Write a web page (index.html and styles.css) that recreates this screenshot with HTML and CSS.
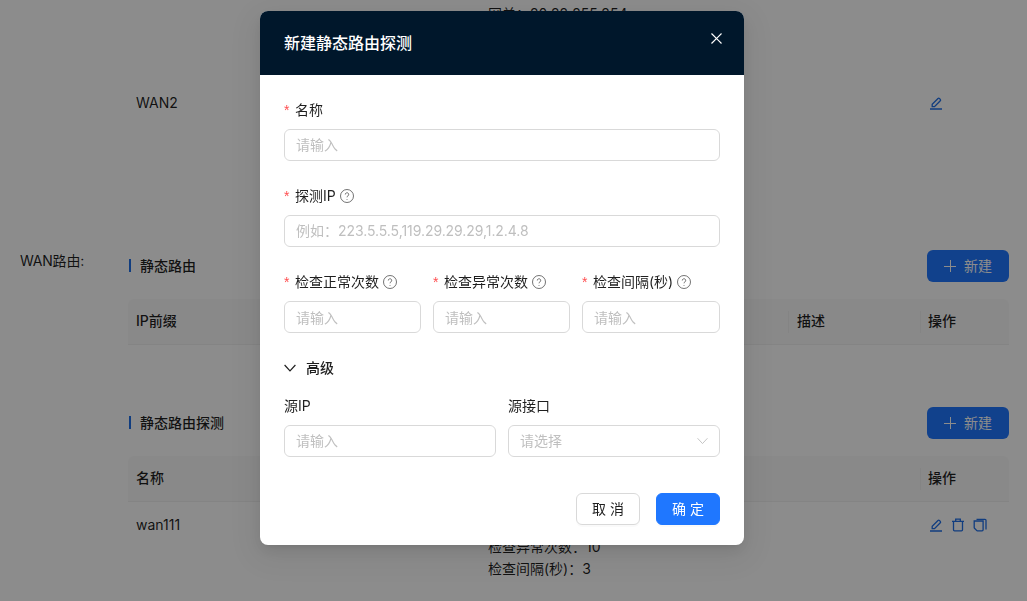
FILE: index.html
```html
<!DOCTYPE html>
<html lang="en">
<head>
    <meta charset="UTF-8">
    <meta name="viewport" content="width=device-width, initial-scale=1.0">
    <title>新建静态路由探测</title>
    <link rel="stylesheet" href="styles.css">
</head>
<body>

    <div class="page">
        <div class="wan-row">
            <div class="wan-name">WAN2</div>
            <div class="wan-info">网关：20.22.255.254</div>
            <div class="wan-action">
                <svg class="act-icon" viewBox="0 0 14 14"><path d="M1 13h12M3.200 10.600V8.300L9 2.500a1 1 0 0 1 1.400 0l.9.9a1 1 0 0 1 0 1.400l-5.800 5.800H3.200z"/></svg>
            </div>
        </div>

        <div class="route-block">
            <div class="route-label">WAN路由:</div>
            <div class="route-main">
                <div class="section-head">
                    <h3 class="section-title">静态路由</h3>
                    <button class="add-btn"><span class="plus"></span>新建</button>
                </div>
                <div class="thead">
                    <div class="th th-grow">IP前缀</div>
                    <div class="th th-desc"><i class="th-sep"></i>描述</div>
                    <div class="th th-op"><i class="th-sep"></i>操作</div>
                </div>

                <div class="section-head section-second">
                    <h3 class="section-title">静态路由探测</h3>
                    <button class="add-btn"><span class="plus"></span>新建</button>
                </div>
                <div class="thead">
                    <div class="th th-grow">名称</div>
                    <div class="th th-op"><i class="th-sep"></i>操作</div>
                </div>
                <div class="trow">
                    <div class="td-name">wan111</div>
                    <div class="td-info">
                        <div>检查异常次数：10</div>
                        <div>检查间隔(秒)：3</div>
                    </div>
                    <div class="td-op">
                        <svg class="act-icon" viewBox="0 0 14 14"><path d="M1 13h12M3.200 10.600V8.300L9 2.500a1 1 0 0 1 1.400 0l.9.9a1 1 0 0 1 0 1.400l-5.800 5.800H3.200z"/></svg>
                        <svg class="act-icon" viewBox="0 0 14 14"><path d="M1 3.300h12M4.700 3V1.200h4.600V3M2.500 3.300v8.500a1 1 0 0 0 1 1h7a1 1 0 0 0 1-1V3.300"/></svg>
                        <svg class="act-icon" viewBox="0 0 14 14"><path d="M3.500 1.300h8.500a1 1 0 0 1 1 1v9.200M1.200 3h8.900v8.800a1 1 0 0 1-1 1H4.400a1 1 0 0 1-.8-.4l-2.100-2.200a1 1 0 0 1-.3-.7z"/></svg>
                    </div>
                </div>
            </div>
        </div>
    </div>

    <div class="mask"></div>

    <div class="modal">
        <div class="modal-header">
            <div class="modal-title">新建静态路由探测</div>
            <svg class="modal-close" viewBox="0 0 11 11"><path d="M.5.500l10 10M10.500.500l-10 10"/></svg>
        </div>
        <div class="modal-body">
            <div class="form-item">
                <label class="form-label required">名称</label>
                <div class="input">请输入</div>
            </div>
            <div class="form-item">
                <label class="form-label required">探测IP<svg class="help" viewBox="0 0 14 14"><circle cx="7" cy="7" r="6.500"/><path d="M5.300 5.500a1.700 1.700 0 1 1 2.600 1.400c-.6.400-.9.700-.9 1.400"/><path d="M7 10v.8"/></svg></label>
                <div class="input">例如：<span class="hint-ip">223.5.5.5,119.29.29.29,1.2.4.8</span></div>
            </div>
            <div class="form-row form-row-three">
                <div class="form-item">
                    <label class="form-label required">检查正常次数<svg class="help" viewBox="0 0 14 14"><circle cx="7" cy="7" r="6.500"/><path d="M5.300 5.500a1.700 1.700 0 1 1 2.600 1.400c-.6.400-.9.700-.9 1.400"/><path d="M7 10v.8"/></svg></label>
                    <div class="input">请输入</div>
                </div>
                <div class="form-item">
                    <label class="form-label required">检查异常次数<svg class="help" viewBox="0 0 14 14"><circle cx="7" cy="7" r="6.500"/><path d="M5.300 5.500a1.700 1.700 0 1 1 2.600 1.400c-.6.400-.9.700-.9 1.400"/><path d="M7 10v.8"/></svg></label>
                    <div class="input">请输入</div>
                </div>
                <div class="form-item">
                    <label class="form-label required">检查间隔(秒)<svg class="help" viewBox="0 0 14 14"><circle cx="7" cy="7" r="6.500"/><path d="M5.300 5.500a1.700 1.700 0 1 1 2.600 1.400c-.6.400-.9.700-.9 1.400"/><path d="M7 10v.8"/></svg></label>
                    <div class="input">请输入</div>
                </div>
            </div>
            <div class="advanced">
                <svg class="advanced-arrow" viewBox="0 0 12 8"><path d="M.6 1 6 6.800 11.400 1"/></svg>
                <span>高级</span>
            </div>
            <div class="form-row form-row-two">
                <div class="form-item">
                    <label class="form-label">源IP</label>
                    <div class="input">请输入</div>
                </div>
                <div class="form-item">
                    <label class="form-label">源接口</label>
                    <div class="input input-select">请选择
                        <svg class="select-arrow" viewBox="0 0 12 8"><path d="M.6 1 6 6.800 11.400 1"/></svg>
                    </div>
                </div>
            </div>
        </div>
        <div class="modal-footer">
            <button class="btn">取 消</button>
            <button class="btn btn-primary">确 定</button>
        </div>
    </div>

</body>
</html>
```

FILE: styles.css
```css
html, body {
    margin: 0;
    height: 601px;
    overflow: hidden;
}

body {
    font-family: Inter, "Noto Sans CJK SC", sans-serif;
    font-size: 14px;
    line-height: 22px;
    color: rgba(0,0,0,0.88);
    background: #fff;
}

button {
    font: inherit;
    cursor: pointer;
}

.page {
    padding: 0 18px 0 20px;
}

.wan-row {
    display: flex;
    align-items: center;
    height: 206px;
    margin-left: 108px;
    margin-bottom: 44px;
}

.wan-name {
    width: 360px;
    padding-left: 8px;
    box-sizing: border-box;
}

.wan-info {
    flex: 1;
    align-self: flex-start;
    padding-top: 3px;
}

.wan-action {
    width: 80px;
    display: flex;
}

.act-icon {
    width: 14px;
    height: 14px;
    fill: none;
    stroke: #1f6fe8;
    stroke-width: 1.3;
}

.route-block {
    display: flex;
}

.route-label {
    width: 108px;
    letter-spacing: -0.2px;
}

.route-main {
    flex: 1;
}

.section-head {
    display: flex;
    justify-content: space-between;
    align-items: center;
    height: 32px;
    margin-bottom: 17px;
}

.section-second {
    margin-top: 62px;
}

.section-title {
    margin: 0 0 2px 1px;
    font-size: 14px;
    font-weight: 500;
    border-left: 2px solid #1f6fe8;
    padding-left: 9px;
    line-height: 13px;
    height: 13px;
    display: flex;
    align-items: center;
}

.add-btn {
    display: flex;
    align-items: center;
    gap: 8px;
    width: 82px;
    height: 32px;
    padding: 0 0 0 17px;
    border: none;
    border-radius: 6px;
    background: #1f77ff;
    color: #fff;
}

.plus {
    width: 12px;
    height: 12px;
    background:
        linear-gradient(#fff, #fff) center / 12px 1px no-repeat,
        linear-gradient(#fff, #fff) center / 1px 12px no-repeat;
}

.thead {
    display: flex;
    height: 46px;
    background: #fafafa;
    border-bottom: 1px solid #f0f0f0;
    border-radius: 6px 6px 0 0;
    box-sizing: border-box;
    font-weight: 500;
}

.th {
    display: flex;
    align-items: center;
    padding: 0 0 2px 8px;
    position: relative;
}

.th-grow {
    flex: 1;
}

.th-desc {
    width: 132px;
    box-sizing: border-box;
    padding-left: 9px;
}

.th-op {
    width: 89px;
    box-sizing: border-box;
}

.th-sep {
    position: absolute;
    left: 0;
    top: 12px;
    height: 22px;
    width: 1px;
    background: #f0f0f0;
}

.trow {
    display: flex;
    padding-top: 12px;
}

.td-name {
    width: 360px;
    padding-left: 8px;
    box-sizing: border-box;
}

.td-info {
    flex: 1;
    padding-top: 22px;
}

.td-op {
    width: 80px;
    display: flex;
    gap: 8px;
    padding-top: 4px;
    align-self: flex-start;
}

.mask {
    position: fixed;
    inset: 0;
    background: rgba(0,0,0,0.45);
}

.modal {
    position: absolute;
    left: 260px;
    top: 11px;
    width: 484px;
    height: 534px;
    background: #fff;
    border-radius: 8px;
    display: flex;
    flex-direction: column;
    box-shadow: 0 6px 16px 0 rgba(0,0,0,0.08), 0 3px 6px -4px rgba(0,0,0,0.12), 0 9px 28px 8px rgba(0,0,0,0.05);
}

.modal-header {
    height: 64px;
    background: #00172b;
    border-radius: 8px 8px 0 0;
    color: #fff;
    padding: 0 24px;
    display: flex;
    align-items: center;
    justify-content: space-between;
    flex-shrink: 0;
}

.modal-title {
    font-size: 16px;
    font-weight: 500;
}

.modal-close {
    width: 11px;
    height: 11px;
    margin: -9px -2px 0 0;
    fill: none;
    stroke: #fff;
    stroke-width: 1.2;
}

.modal-body {
    padding: 24px 24px 0;
    flex: 1;
}

.form-item {
    margin-bottom: 24px;
    min-width: 0;
}

.form-label {
    display: flex;
    align-items: center;
    height: 22px;
    margin-bottom: 8px;
}

.required::before {
    content: "*";
    color: #ff4d4f;
    width: 11px;
    font-family: "Liberation Sans", sans-serif;
}

.help {
    width: 14px;
    height: 14px;
    margin-left: 4px;
    fill: none;
    stroke: rgba(0,0,0,0.55);
    stroke-width: 1;
}

.input {
    height: 32px;
    box-sizing: border-box;
    border: 1px solid #d9d9d9;
    border-radius: 6px;
    padding: 0 11px;
    line-height: 30px;
    color: #bfbfbf;
    position: relative;
}

.hint-ip {
    letter-spacing: -0.07px;
}

.form-row {
    display: grid;
    gap: 12px;
}

.form-row-three {
    grid-template-columns: 137px 137px 138px;
}

.form-row-three .input {
    line-height: 32px;
}

.form-row-two {
    grid-template-columns: 1fr 1fr;
}

.advanced {
    display: flex;
    align-items: center;
    gap: 10px;
    font-weight: 500;
    height: 22px;
    margin-bottom: 16px;
}

.advanced-arrow {
    width: 12px;
    height: 8px;
    fill: none;
    stroke: rgba(0,0,0,0.88);
    stroke-width: 1.2;
}

.select-arrow {
    position: absolute;
    right: 11px;
    top: 11px;
    width: 11px;
    height: 8px;
    fill: none;
    stroke: #bfbfbf;
    stroke-width: 1;
}

.modal-footer {
    display: flex;
    justify-content: flex-end;
    gap: 16px;
    padding: 0 24px 20px;
}

.btn {
    width: 64px;
    height: 32px;
    border: 1px solid #d9d9d9;
    border-radius: 6px;
    background: #fff;
    color: rgba(0,0,0,0.88);
    padding: 0;
    box-shadow: 0 2px 0 rgba(0,0,0,0.02);
}

.btn-primary {
    background: #1f77ff;
    border-color: #1f77ff;
    color: #fff;
}
```
